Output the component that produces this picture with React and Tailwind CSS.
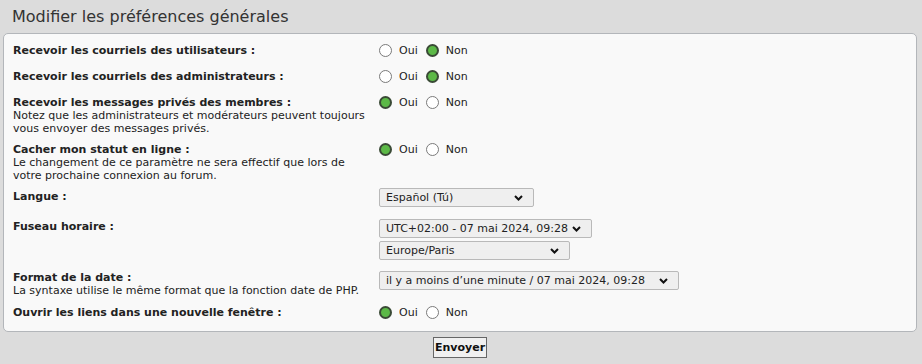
import React from 'react';

const Radio = ({ checked }) => (
    <span
        className={
            checked
                ? 'inline-block w-[13px] h-[13px] rounded-full bg-[#5cb947] border-2 border-[#3a4a36] shrink-0'
                : 'inline-block w-[13px] h-[13px] rounded-full bg-white border border-[#7a7a7a] shrink-0'
        }
    />
);

const YesNo = ({ value }) => (
    <div className="flex items-center h-[13px]">
        <Radio checked={value === 'oui'} />
        <span className="ml-[7px] mr-[8px]">Oui</span>
        <Radio checked={value === 'non'} />
        <span className="ml-[7px]">Non</span>
    </div>
);

const Select = ({ label, width }) => (
    <div
        className="h-[19px] flex items-center justify-between pl-[6px] pr-[10px] bg-[#efefef] border border-[#b9b9b9] rounded-[2px] text-[#222]"
        style={{ width }}
    >
        <span className="whitespace-nowrap">{label}</span>
        <svg width="9" height="6" viewBox="0 0 9 6" className="shrink-0">
            <path d="M1 1 L4.5 4.5 L8 1" fill="none" stroke="#111" strokeWidth="2" />
        </svg>
    </div>
);

const Row = ({ label, desc, height, children }) => (
    <div className="flex items-start" style={{ height }}>
        <div className="w-[366px] shrink-0">
            <div className="font-bold text-[#222]">{label}</div>
            {desc && <div className="text-[#222]">{desc}</div>}
        </div>
        <div>{children}</div>
    </div>
);

export default function App() {
    return (
        <div
            className="min-h-screen bg-[#dcdcdc] text-[11px] leading-[13px] text-[#222]"
            style={{ fontFamily: '"DejaVu Sans", Verdana, sans-serif' }}
        >
            <h2 className="text-[16px] leading-[20px] text-[#333] pl-[12px] pt-[7px] pb-[6px] font-normal">
                Modifier les préférences générales
            </h2>

            <div className="ml-[3px] mr-[5px] bg-[#f9f9f9] border border-[#b3b6ba] rounded-[5px] pl-[9px] pt-[10px] pb-[12px]">
                <Row label="Recevoir les courriels des utilisateurs :" height={26}>
                    <YesNo value="non" />
                </Row>
                <Row label="Recevoir les courriels des administrateurs :" height={26}>
                    <YesNo value="non" />
                </Row>
                <Row
                    label="Recevoir les messages privés des membres :"
                    desc={<>Notez que les administrateurs et modérateurs peuvent toujours<br />vous envoyer des messages privés.</>}
                    height={47}
                >
                    <YesNo value="oui" />
                </Row>
                <Row
                    label="Cacher mon statut en ligne :"
                    desc={<>Le changement de ce paramètre ne sera effectif que lors de<br />votre prochaine connexion au forum.</>}
                    height={47}
                >
                    <YesNo value="oui" />
                </Row>
                <Row label="Langue :" height={30}>
                    <div className="-mt-[2px]">
                        <Select label="Español (Tú)" width={155} />
                    </div>
                </Row>
                <Row label="Fuseau horaire :" height={51}>
                    <div className="-mt-[1px] flex flex-col gap-[3px]">
                        <Select label="UTC+02:00 - 07 mai 2024, 09:28" width={213} />
                        <Select label="Europe/Paris" width={191} />
                    </div>
                </Row>
                <Row
                    label="Format de la date :"
                    desc="La syntaxe utilise le même format que la fonction date de PHP."
                    height={35}
                >
                    <Select label="il y a moins d’une minute / 07 mai 2024, 09:28" width={300} />
                </Row>
                <Row label="Ouvrir les liens dans une nouvelle fenêtre :" height={13}>
                    <YesNo value="oui" />
                </Row>
            </div>

            <div className="flex justify-center pt-[5px] pr-[2px]">
                <button className="h-[21px] px-[1px] bg-[#f0f0f0] border border-[#666] font-bold text-[#111] leading-[19px]">
                    Envoyer
                </button>
            </div>
        </div>
    );
}
